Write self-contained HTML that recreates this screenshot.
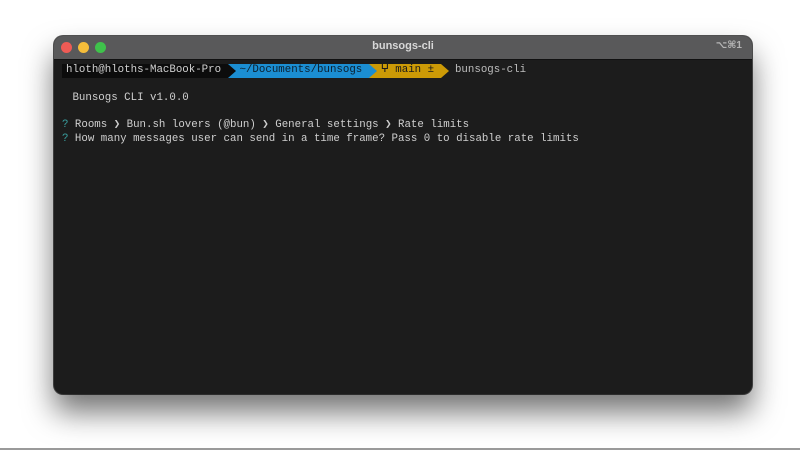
<!DOCTYPE html>
<html><head><style>
html,body{margin:0;padding:0;width:800px;height:450px;background:#fff;overflow:hidden;position:relative}
.win{position:absolute;left:54px;top:36px;width:698px;height:358px;background:#1c1c1c;border-radius:9px;box-shadow:0 18px 30px rgba(0,0,0,.55),0 0 0 1px #555;overflow:hidden}
.tb{height:23px;background:#59595a;position:relative;border-bottom:1px solid #111}
.dot{position:absolute;top:6px;width:11px;height:11px;border-radius:50%}
.title{position:absolute;left:0;right:0;top:4px;text-align:center;color:#d8d8d8;font:bold 11px "Liberation Sans",sans-serif}
.sc{position:absolute;right:10px;top:4px;color:#b5b5b5;font:bold 10px "Liberation Sans","DejaVu Sans",sans-serif}
.t{position:absolute;left:8px;top:28px;font:10.77px/13.7px "Liberation Mono",monospace;color:#cfcfcf;white-space:pre}
.q{color:#3aa0a0}
.s{display:inline-block;height:14px;vertical-align:top;position:relative}
.ar{display:inline-block;width:0;height:0;border-top:7px solid transparent;border-bottom:7px solid transparent;border-left:8px solid;vertical-align:top}
</style></head><body>
<div class="win">
<div class="tb">
<div class="dot" style="left:7px;background:#ee5b55"></div>
<div class="dot" style="left:24px;background:#f5bd3a"></div>
<div class="dot" style="left:41px;background:#3fc24b"></div>
<div class="title">bunsogs-cli</div>
<div class="sc">⌥⌘1</div>
</div>
<div class="t"><span class="s" style="background:#0c0c0c;color:#d0d0d0;padding:0 0 0 4px">hloth@hloths-MacBook-Pro </span><span class="s" style="background:#1b8ed2"><span class="ar" style="border-left-color:#0c0c0c"></span></span><span class="s" style="background:#1b8ed2;color:#0b2030;padding-left:4px">~/Documents/bunsogs </span><span class="s" style="background:#cc9a06"><span class="ar" style="border-left-color:#1b8ed2"></span></span><span class="s" style="background:#cc9a06;color:#1a1a1a;padding-left:4px">ⵖ main ± </span><span class="ar" style="border-left-color:#cc9a06"></span><span style="color:#bdbdbd"> bunsogs-cli</span>

 <span style="margin-left:4px">Bunsogs CLI v1.0.0</span>

<span class="q">?</span> Rooms ❯ Bun.sh lovers (@bun) ❯ General settings ❯ Rate limits
<span class="q">?</span> How many messages user can send in a time frame? Pass 0 to disable rate limits</div>
</div>
<div style="position:absolute;left:0;right:0;top:448px;height:2px;background:#9a9a9a"></div>
</body></html>
